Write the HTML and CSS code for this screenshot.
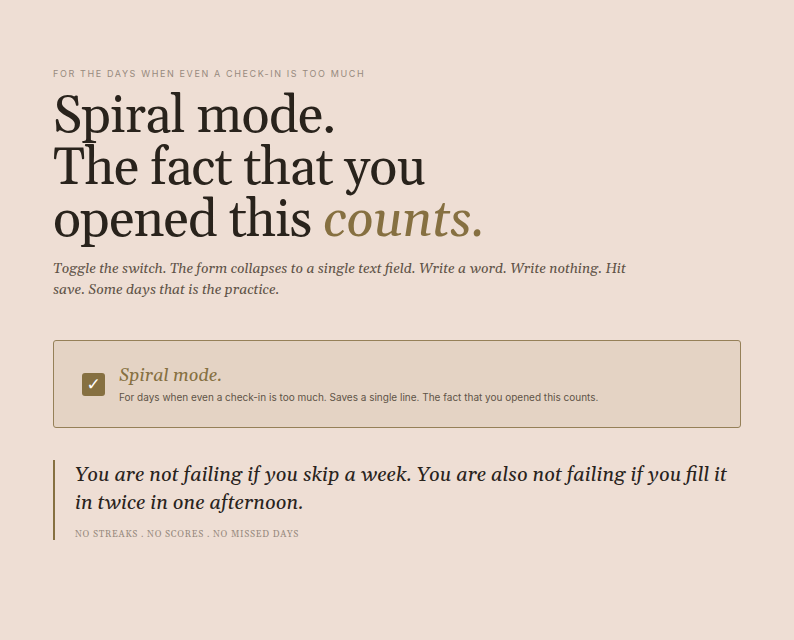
FILE: index.html
```html
<!DOCTYPE html>
<html lang="en">
<head>
<meta charset="utf-8">
<meta name="viewport" content="width=device-width, initial-scale=1">
<title>Spiral mode</title>
<link rel="stylesheet" href="styles.css">
</head>
<body>
<main class="page">
  <header class="intro">
    <p class="eyebrow">For the days when even a check-in is too much</p>
    <h1 class="title">Spiral mode.<br>The fact that you<br>opened this <em>counts.</em></h1>
    <p class="lede">Toggle the switch. The form collapses to a single text field. Write a word. Write nothing. Hit save. Some days that is the practice.</p>
  </header>
  <label class="card" for="spiral">
    <input class="check" id="spiral" type="checkbox" checked>
    <span class="card-text">
      <span class="card-title">Spiral mode.</span>
      <span class="card-note">For days when even a check-in is too much. Saves a single line. The fact that you opened this counts.</span>
    </span>
  </label>
  <blockquote class="quote">
    <p class="quote-text">You are not failing if you skip a week. You are also not failing if you fill it in twice in one afternoon.</p>
    <footer class="quote-note">No streaks . No scores . No missed days</footer>
  </blockquote>
</main>
</body>
</html>
```
FILE: styles.css
```css
* {
  box-sizing: border-box;
  margin: 0;
}

body {
  background: #eeded4;
  color: #29231c;
  font-family: Georgia, Gelasio, "Liberation Serif", serif;
}

.page {
  padding: 68px 53px;
}

.eyebrow {
  font: 9px/12px Inter, sans-serif;
  letter-spacing: 0.18em;
  text-transform: uppercase;
  color: #978a7e;
}

.title {
  margin-top: 11px;
  font-size: 52px;
  line-height: 52px;
  font-weight: 400;
  letter-spacing: -0.015em;
}

.title em {
  color: #867041;
}

.lede {
  max-width: 600px;
  margin-top: 12px;
  font-size: 14px;
  line-height: 21px;
  font-style: italic;
  color: #5f5347;
}

.card {
  display: flex;
  align-items: center;
  gap: 14px;
  margin-top: 39px;
  padding: 23px 28px;
  border: 1px solid #958058;
  border-radius: 3px;
  background: #e4d3c4;
}

.check {
  appearance: none;
  display: grid;
  place-items: center;
  flex: none;
  width: 23px;
  height: 23px;
  border-radius: 3px;
  background: #867041;
}

.check:checked::before {
  content: "✓";
  color: #fff;
  font: 17px/23px "DejaVu Sans", sans-serif;
}

.card-text {
  display: grid;
  gap: 2px;
}

.card-title {
  font-size: 18px;
  line-height: 24px;
  font-style: italic;
  color: #867041;
}

.card-note {
  font: 10px/14px Inter, sans-serif;
  color: #5f5347;
}

.quote {
  margin-top: 32px;
  padding: 1px 0 0 20px;
  border-left: 2px solid #867041;
}

.quote-text {
  font-size: 20px;
  line-height: 28px;
  font-style: italic;
}

.quote-note {
  margin-top: 12px;
  font-size: 9px;
  line-height: 11px;
  letter-spacing: 0.08em;
  text-transform: uppercase;
  color: #978a7e;
}
```
